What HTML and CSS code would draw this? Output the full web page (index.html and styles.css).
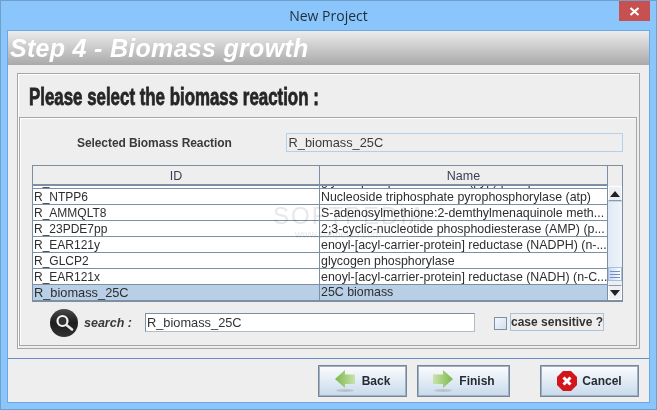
FILE: index.html
```html
<!DOCTYPE html>
<html lang="en">
<head>
<meta charset="utf-8">
<title>New Project</title>
<link rel="stylesheet" href="styles.css">
</head>
<body>
<div class="window">
  <div class="titlebar">
    <span class="title-text">New Project</span>
    <div class="close"><svg width="11" height="9" viewBox="0 0 11 9"><path d="M1.5 1 L9.5 8 M9.5 1 L1.5 8" stroke="#fff" stroke-width="2.2"/></svg></div>
  </div>
  <div class="client">
    <div class="banner">Step 4 - Biomass growth</div>
    <div class="main">
      <div class="etched outer">
        <h1 class="heading"><span class="heading-text">Please select the biomass reaction :</span></h1>
        <div class="etched inner">
          <div class="selected-row">
            <div class="selected-label">Selected Biomass Reaction</div>
            <div class="selected-field">R_biomass_25C</div>
          </div>
          <div class="table">
            <div class="table-main">
              <div class="thead">
                <div class="th th-id">ID</div>
                <div class="th th-name">Name</div>
              </div>
              <div class="tbody">
                <div class="row"><div class="cell cell-id">R_PPA2</div><div class="cell cell-name">glycerophosphodiesterase (pyp) phosphatase</div></div>
                <div class="row"><div class="cell cell-id">R_NTPP6</div><div class="cell cell-name">Nucleoside triphosphate pyrophosphorylase (atp)</div></div>
                <div class="row"><div class="cell cell-id">R_AMMQLT8</div><div class="cell cell-name">S-adenosylmethione:2-demthylmenaquinole meth...</div></div>
                <div class="row"><div class="cell cell-id">R_23PDE7pp</div><div class="cell cell-name">2;3-cyclic-nucleotide phosphodiesterase (AMP) (p...</div></div>
                <div class="row"><div class="cell cell-id">R_EAR121y</div><div class="cell cell-name">enoyl-[acyl-carrier-protein] reductase (NADPH) (n-...</div></div>
                <div class="row"><div class="cell cell-id">R_GLCP2</div><div class="cell cell-name">glycogen phosphorylase</div></div>
                <div class="row"><div class="cell cell-id">R_EAR121x</div><div class="cell cell-name">enoyl-[acyl-carrier-protein] reductase (NADH) (n-C...</div></div>
                <div class="row row-selected"><div class="cell cell-id">R_biomass_25C</div><div class="cell cell-name">25C biomass</div></div>
              </div>
            </div>
            <div class="scroll-col">
              <div class="scroll-corner"></div>
              <div class="scrollbar">
                <div class="sb-btn sb-up"><svg width="10" height="6" viewBox="0 0 10 6"><path d="M5 0 L10 6 L0 6 Z" fill="#222"/></svg></div>
                <div class="sb-track"></div>
                <div class="sb-thumb"><svg width="10" height="7" viewBox="0 0 10 7"><path d="M0 .5H10M0 3.5H10M0 6.5H10" stroke="#6f8fd0" stroke-width="1"/></svg></div>
                <div class="sb-gap"></div>
                <div class="sb-btn sb-down"><svg width="10" height="6" viewBox="0 0 10 6"><path d="M0 0 L10 0 L5 6 Z" fill="#222"/></svg></div>
              </div>
            </div>
          </div>
          <div class="search-row">
            <svg class="search-icon" width="28" height="28" viewBox="0 0 28 28">
              <defs><linearGradient id="sg" x1="0" y1="0" x2="0" y2="1"><stop offset="0" stop-color="#4a4a4a"/><stop offset=".5" stop-color="#1c1c1c"/><stop offset="1" stop-color="#333"/></linearGradient></defs>
              <circle cx="14" cy="14" r="14" fill="url(#sg)"/>
              <circle cx="12.5" cy="12" r="5" fill="#333" stroke="#f4f4f4" stroke-width="2.2"/>
              <path d="M16.5 16 L22 20.5" stroke="#e8e8e8" stroke-width="2.6" stroke-linecap="round"/>
            </svg>
            <span class="search-label">search :</span>
            <div class="search-input">R_biomass_25C</div>
            <div class="checkbox"></div>
            <div class="check-label">case sensitive ?</div>
          </div>
        </div>
      </div>
    </div>
    <div class="footer">
      <div class="btn btn-back">
        <svg width="22" height="24" viewBox="0 0 22 24">
          <defs><linearGradient id="ga" x1="0" y1="0" x2="1" y2="0"><stop offset="0" stop-color="#7cb848"/><stop offset="1" stop-color="#c9e2ae"/></linearGradient></defs>
          <ellipse cx="10" cy="21.5" rx="9" ry="1.5" fill="#b9c3cc"/>
          <path d="M0 10 L10 1 L10 5.5 L20 5.5 L20 15 L10 15 L10 19 Z" fill="url(#ga)"/>
        </svg>
        <span>Back</span>
      </div>
      <div class="btn btn-finish">
        <svg width="22" height="24" viewBox="0 0 22 24">
          <defs><linearGradient id="gb" x1="1" y1="0" x2="0" y2="0"><stop offset="0" stop-color="#7cb848"/><stop offset="1" stop-color="#c9e2ae"/></linearGradient></defs>
          <ellipse cx="11" cy="21.5" rx="9" ry="1.5" fill="#b9c3cc"/>
          <path d="M21 10 L11 1 L11 5.5 L1 5.5 L1 15 L11 15 L11 19 Z" fill="url(#gb)"/>
        </svg>
        <span>Finish</span>
      </div>
      <div class="btn btn-cancel">
        <svg width="20" height="20" viewBox="0 0 20 20">
          <path d="M6 0H14L20 6V14L14 20H6L0 14V6Z" fill="#d2161c"/>
          <path d="M6.5 6.5 L13.5 13.5 M13.5 6.5 L6.5 13.5" stroke="#fff" stroke-width="3"/>
        </svg>
        <span>Cancel</span>
      </div>
    </div>
  </div>
</div>
<div class="watermark"><div class="wm-big">SOFTPEDIA</div><div class="wm-small">www.softpedia.com</div></div>
</body>
</html>
```
FILE: styles.css
```css
* { box-sizing: border-box; }
html, body { margin: 0; padding: 0; }
body { width: 657px; height: 410px; overflow: hidden; position: relative; font-family: "Liberation Sans", Arial, sans-serif; font-size: 12px; color: #333; }

.window { width: 657px; height: 410px; background: #8ac5fb; border: 1px solid #6f9fcb; padding: 0 6px 6px; display: flex; flex-direction: column; }
.titlebar { height: 29px; flex: none; position: relative; display: flex; justify-content: center; align-items: flex-start; padding-top: 5px; }
.title-text { font-family: "Open Sans", sans-serif; font-size: 14px; line-height: 20px; color: #1f2d3a; }
.close { position: absolute; right: 0; top: 0; width: 31px; height: 20px; background: #c75050; display: flex; align-items: center; justify-content: center; }

.client { width: 643px; height: 373px; border: 1px solid #6ea8e0; background: #eeeeee; display: flex; flex-direction: column; }
.banner { height: 34px; flex: none; background: linear-gradient(#ececec, #a9a9a9); color: #fff; font-weight: bold; font-style: italic; font-size: 25px; line-height: 35px; padding-left: 2px; letter-spacing: .3px; }
.main { flex: 1; padding: 8px 9px 9px; border-bottom: 1px solid #6a8cc8; }
.etched { border: 1px solid #a6a6a6; box-shadow: inset 1px 1px 0 #fff; }
.outer { height: 276px; width: 623px; padding: 1px; display: flex; flex-direction: column; }
.heading { margin: 0; height: 42px; flex: none; padding-left: 10px; font-size: 24px; line-height: 44px; font-weight: bold; color: #262626; white-space: nowrap; }
.heading-text { display: inline-block; transform: scaleX(.703); transform-origin: 0 50%; -webkit-text-stroke: .8px #262626; }
.inner { width: 618px; height: 229px; padding: 15px 13px 0 12px; display: flex; flex-direction: column; }

.selected-row { display: flex; align-items: center; height: 19px; flex: none; }
.selected-label { width: 254px; padding-left: 45px; font-weight: bold; color: #3a3a3a; letter-spacing: -.08px; }
.selected-field { width: 338px; height: 19px; border: 1px solid #b8d0e6; padding-left: 2px; line-height: 18px; font-size: 12.8px; color: #3a3a3a; }

.table { width: 591px; height: 137px; margin-top: 13px; flex: none; display: flex; border: 1px solid #7d8fa3; border-bottom-width: 2px; }
.table-main { width: 574px; display: flex; flex-direction: column; }
.thead { height: 20px; flex: none; display: flex; border-bottom: 2px solid #7d8fa3; background: #eeeeee; }
.th { text-align: center; line-height: 20px; font-size: 12.5px; color: #3d3d55; }
.th-id { width: 287px; border-right: 1px solid #7d8fa3; }
.th-name { flex: 1; }
.tbody { flex: 1; overflow: hidden; display: flex; flex-direction: column; justify-content: flex-end; background: #fff; }
.row { height: 16px; flex: none; display: flex; border-bottom: 1px solid #7d8fa3; line-height: 17px; font-size: 12.4px; color: #2e2e2e; }
.row:last-child { border-bottom: 0; height: 15px; line-height: 15px; }
.row-selected { background: #b8cfe5; }
.cell { overflow: hidden; white-space: nowrap; padding-left: 1px; }
.cell-id { width: 287px; border-right: 1px solid #7d8fa3; font-size: 12px; }
.row-selected .cell-id { font-size: 12.8px; }
.cell-name { flex: 1; }

.scroll-col { flex: 1; display: flex; flex-direction: column; border-left: 1px solid #7d8fa3; }
.scroll-corner { height: 20px; flex: none; background: #eeeeee; }
.scrollbar { flex: 1; display: flex; flex-direction: column; background: #e9eff6; }
.sb-btn { height: 15px; flex: none; display: flex; align-items: center; justify-content: center; background: #eceff3; border: 1px solid #fff; border-bottom-color: #8b9aab; }
.sb-track { flex: 1; background: linear-gradient(90deg, #dfe9f5, #f0f4f9); border-top: 1px solid #c6d8ec; }
.sb-thumb { height: 14px; flex: none; display: flex; align-items: center; justify-content: center; background: linear-gradient(90deg, #c7d9ef, #ffffff); border: 1px solid #a9bfd9; }
.sb-gap { height: 4px; flex: none; background: #eceff3; }
.sb-down { border-bottom-color: #fff; border-top-color: #8b9aab; }

.search-row { display: flex; align-items: center; height: 28px; flex: none; margin-top: 7px; }
.search-icon { margin-left: 18px; flex: none; }
.search-label { width: 67px; padding-left: 6px; font-weight: bold; font-style: italic; font-size: 12.5px; color: #3a3a3a; }
.search-input { width: 330px; height: 19px; border: 1px solid #7d8fa3; border-right-color: #b0bcc8; border-bottom-color: #b0bcc8; background: #fff; padding-left: 1px; line-height: 17px; font-size: 12.8px; color: #333; margin-top: -2px; }
.checkbox { width: 13px; height: 13px; margin-left: 19px; margin-top: 1px; background: linear-gradient(135deg, #f4f8fc, #cfdff0); border: 1px solid #7d8fa3; }
.check-label { width: 94px; height: 18px; margin-left: 3px; margin-top: -2px; border: 1px solid #a9c1d9; font-weight: bold; line-height: 16px; text-align: center; color: #333; white-space: nowrap; }

.footer { flex: 1; display: flex; align-items: center; padding: 0 9px 0 310px; }
.btn { height: 32px; display: flex; align-items: center; justify-content: center; gap: 5px; background: linear-gradient(#fbfcfe, #c8daeb); border: 1px solid #73869a; box-shadow: inset 0 0 0 1px #a3b0bf; font-weight: bold; color: #262c34; font-size: 12px; }
.btn-back { width: 89px; margin-right: 10px; }
.btn-finish { width: 93px; margin-right: 30px; }
.btn-cancel { width: 99px; }

.watermark { position: absolute; left: 273px; top: 203px; color: #d8d8d8; mix-blend-mode: multiply; opacity: .6; pointer-events: none; }
.wm-big { font-size: 24px; line-height: 26px; letter-spacing: 2px; }
.wm-small { font-size: 10px; line-height: 12px; padding-left: 22px; }
```
